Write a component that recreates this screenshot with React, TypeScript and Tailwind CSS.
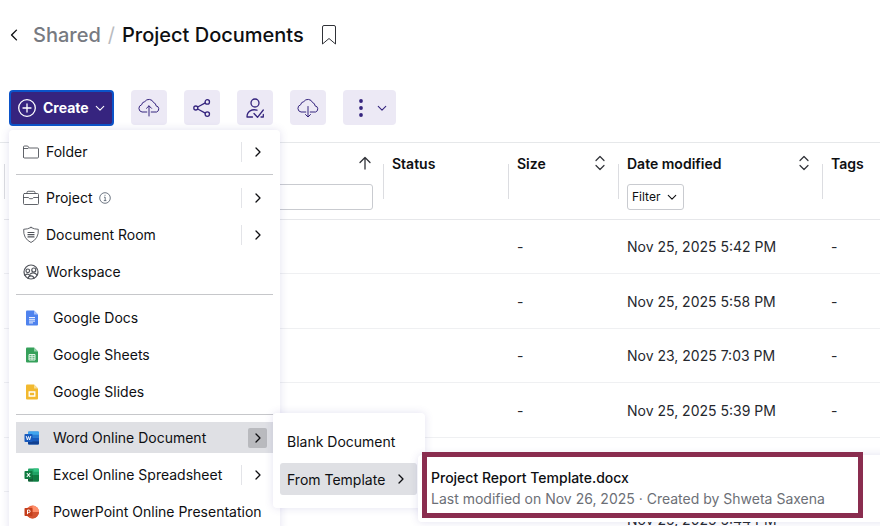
import type { ReactNode } from 'react'

// null: nothing to show for that file yet
const ROWS = [
  'Nov 25, 2025 5:42 PM',
  'Nov 25, 2025 5:58 PM',
  'Nov 23, 2025 7:03 PM',
  'Nov 25, 2025 5:39 PM',
  null,
  'Nov 25, 2025 5:44 PM',
]

function Chevron({ dir, className }: { dir: 'left' | 'right' | 'down'; className: string }) {
  const d = { left: 'M7.8 1.5 3.3 6l4.500 4.500', right: 'M4 2 8 6 4 10', down: 'M1.5 4 6 8.5 10.5 4' }[dir]
  return (
    <svg viewBox="0 0 12 12" className={className} fill="none" stroke="currentColor" strokeWidth="1.3" strokeLinecap="round" strokeLinejoin="round">
      <path d={d} />
    </svg>
  )
}

function Line({ children, className = 'h-[18px] w-[18px]' }: { children: ReactNode; className?: string }) {
  return (
    <svg viewBox="0 0 18 18" className={className} fill="none" stroke="currentColor" strokeWidth="0.9" strokeLinecap="round" strokeLinejoin="round">
      {children}
    </svg>
  )
}

function CloudIcon({ up }: { up?: boolean }) {
  return (
    <svg viewBox="0 0 24 24" className="h-6 w-6" fill="none" stroke="currentColor" strokeWidth="1" strokeLinecap="round" strokeLinejoin="round">
      <path d="M9.800 16H5A3.700 3.700 0 0 1 4.600 8.800A4 4 0 0 1 7.800 5.600A5 5 0 0 1 16.600 6.600A3.300 3.300 0 0 1 19 9.800A3.200 3.200 0 0 1 19.600 16H14.200" />
      {up ? <path d="M12 20V10M9.500 12.300 12 9.800 14.500 12.300" /> : <path d="M12 10.500V20.500M9.500 18.500 12 21 14.500 18.500" />}
    </svg>
  )
}

function ShareIcon() {
  return (
    <svg viewBox="0 0 24 24" className="h-6 w-6" fill="none" stroke="currentColor" strokeWidth="1.3">
      <circle cx="5.800" cy="12" r="2" />
      <circle cx="17.300" cy="5.900" r="2.200" />
      <circle cx="17.300" cy="18.100" r="2.200" />
      <path d="M7.700 11 15.300 6.900M7.700 13l7.600 4.100" />
    </svg>
  )
}

function UserCheckIcon() {
  return (
    <svg viewBox="0 0 24 24" className="h-6 w-6" fill="none" stroke="currentColor" strokeWidth="1.3" strokeLinecap="round" strokeLinejoin="round">
      <circle cx="12" cy="7" r="4" />
      <path d="M14 14.200C9 12.800 4 15 4 21H9.500M11 17.500l3.500 3.800L20.300 14M18 21h2.300v-2.500" />
    </svg>
  )
}

const FolderIcon = () => (
  <Line>
    <path d="M1.500 14V4Q1.500 3 2.500 3H5.700L7.200 5H15.500Q16.500 5 16.500 6V14Q16.500 15 15.500 15H2.500Q1.500 15 1.500 14ZM1.500 5.500H6" />
  </Line>
)

const ProjectIcon = () => (
  <Line>
    <path d="M5 4.500V3.500Q5 2.300 6.200 2.300H11.800Q13 2.300 13 3.500V4.500M2.500 4.500H15.500Q16.500 4.500 16.500 5.500V14.500Q16.500 15.500 15.500 15.500H2.500Q1.500 15.500 1.500 14.500V5.500Q1.500 4.500 2.500 4.500ZM1.500 8.500H6.500L7.500 9.700H10.500L11.500 8.500H16.500" />
  </Line>
)

const RoomIcon = () => (
  <Line>
    <path d="M9 1.500Q12.500 3.300 16.300 3.300Q17 12.500 9 16.500Q1 12.500 1.700 3.300Q5.500 3.300 9 1.500Z" />
    <path d="M6 6.500H12M6 8.700H12M6 10.900H12" strokeWidth="1.200" />
  </Line>
)

const WorkspaceIcon = () => (
  <Line>
    <g strokeWidth="1.200">
      <circle cx="9" cy="9" r="7" />
      <circle cx="5.800" cy="7.800" r="1.800" />
      <circle cx="11.800" cy="7" r="2" />
      <path d="M3 12.300Q5.500 9.800 8 12.500M8.300 10.900Q12 8.500 15 11.800M6 15.300Q6.500 12.800 9 12.800T12 15.300" />
    </g>
  </Line>
)

function GoogleIcon({ kind }: { kind: 'docs' | 'sheets' | 'slides' }) {
  const fill = { docs: '#4f83ee', sheets: '#35a05a', slides: '#f2b92f' }[kind]
  const fold = { docs: '#a5c2fa', sheets: '#8fd0a5', slides: '#f8dd92' }[kind]
  return (
    <svg viewBox="0 0 12 16" className="h-4 w-3" fill="none">
      <path d="M1 0.500H8L12 4.500V14.500Q12 15.500 11 15.500H1Q0 15.500 0 14.500V1.500Q0 0.500 1 0.500Z" fill={fill} />
      <path d="M8 0.500 12 4.500H8Z" fill={fold} />
      {kind === 'docs' && <path d="M3 7.500H9M3 9.300H9M3 11.100H9M3 12.900H7" stroke="#fff" strokeWidth="0.900" />}
      {kind === 'sheets' && <path d="M3 7.500H9V13H3ZM3 9.300H9M3 11.200H9M6 7.500V13" stroke="#dff3e5" strokeWidth="1" />}
      {kind === 'slides' && <path d="M3.200 8H8.800V12H3.200Z" stroke="#fff" strokeWidth="1.300" />}
    </svg>
  )
}

const WordIcon = () => (
  <svg viewBox="0 0 16 16" className="h-4 w-4">
    <rect x="4" y="1.500" width="11" height="13" rx="1" fill="#2b7cd3" />
    <path d="M5 1.500H14Q15 1.500 15 2.500V4.700H4V2.500Q4 1.500 5 1.500Z" fill="#41a5ee" />
    <rect x="4" y="8" width="11" height="3.500" fill="#185abd" />
    <path d="M4 11.300H15V13.500Q15 14.500 14 14.500H5Q4 14.500 4 13.500Z" fill="#103f91" />
    <rect x="0.500" y="4" width="8" height="8" rx="0.800" fill="#185abd" />
    <path d="M2.200 6 3.400 10 4.500 6.500 5.600 10 6.800 6" fill="none" stroke="#fff" strokeWidth="0.900" />
  </svg>
)

const ExcelIcon = () => (
  <svg viewBox="0 0 16 16" className="h-4 w-4">
    <rect x="4" y="1.500" width="11" height="13" rx="1" fill="#21a366" />
    <path d="M9.500 1.500H14Q15 1.500 15 2.500V4.700H9.500Z" fill="#33c481" />
    <path d="M4 8H9.500V14.500H5Q4 14.500 4 13.500Z" fill="#185c37" />
    <path d="M9.500 8H15V13.500Q15 14.500 14 14.500H9.500Z" fill="#107c41" />
    <rect x="0.500" y="4" width="8" height="8" rx="0.800" fill="#107c41" />
    <path d="M2.800 6 6.200 10M6.200 6 2.800 10" fill="none" stroke="#fff" strokeWidth="1.100" />
  </svg>
)

const PowerPointIcon = () => (
  <svg viewBox="0 0 16 16" className="h-4 w-4">
    <circle cx="8.500" cy="8" r="6.500" fill="#ed6c47" />
    <path d="M8.500 1.500A6.500 6.500 0 0 1 15 8H8.500Z" fill="#ff8f6b" />
    <path d="M2 8H15A6.500 6.500 0 0 1 2 8Z" fill="#d35230" />
    <rect x="0.500" y="4" width="8" height="8" rx="0.800" fill="#c43e1c" />
    <path d="M3.500 10.200V6H4.800A1.300 1.300 0 0 1 4.800 8.600H3.500" fill="none" stroke="#fff" strokeWidth="1" />
  </svg>
)

const InfoIcon = () => (
  <svg viewBox="0 0 12 12" className="ml-[6px] h-3 w-3 text-gray-600" fill="none" stroke="currentColor" strokeWidth="0.800">
    <circle cx="6" cy="6" r="5.300" />
    <path d="M5 5.200H6.200V8.500M4.800 8.600H7.400M5.500 3.300H6.500" />
  </svg>
)

type Item = { label: string; icon: ReactNode; info?: boolean; arrow?: boolean; active?: boolean; app?: boolean }

const GROUPS: Item[][] = [
  [{ label: 'Folder', icon: <FolderIcon />, arrow: true }],
  [
    { label: 'Project', icon: <ProjectIcon />, info: true, arrow: true },
    { label: 'Document Room', icon: <RoomIcon />, arrow: true },
    { label: 'Workspace', icon: <WorkspaceIcon /> },
  ],
  [
    { label: 'Google Docs', icon: <GoogleIcon kind="docs" />, app: true },
    { label: 'Google Sheets', icon: <GoogleIcon kind="sheets" />, app: true },
    { label: 'Google Slides', icon: <GoogleIcon kind="slides" />, app: true },
  ],
  [
    { label: 'Word Online Document', icon: <WordIcon />, arrow: true, active: true, app: true },
    { label: 'Excel Online Spreadsheet', icon: <ExcelIcon />, arrow: true, app: true },
    { label: 'PowerPoint Online Presentation', icon: <PowerPointIcon />, app: true },
  ],
]

function MenuItem({ item }: { item: Item }) {
  return (
    <button role="menuitem" className={'flex h-[31px] w-full items-center text-left ' + (item.active ? 'bg-[#dfe0e4]' : 'bg-white')}>
      <span className={'flex shrink-0 justify-center text-[#50535a] ' + (item.app ? 'ml-2 mr-[13px] w-4' : 'mx-[6px] w-[18px]')}>
        {item.icon}
      </span>
      <span className="whitespace-nowrap">{item.label}</span>
      {item.info && <InfoIcon />}
      {item.arrow && (
        <span className={'ml-auto mr-[6px] flex h-5 items-center ' + (item.active ? '' : 'border-l border-[#e3e4e8]')}>
          <span className={'flex h-5 items-center justify-center rounded-xs ' + (item.active ? 'w-[19px] bg-[#b9babe]' : 'ml-[6px] w-[19px]')}>
            <Chevron dir="right" className="h-3 w-3" />
          </span>
        </span>
      )}
    </button>
  )
}

function CreateMenu() {
  return (
    <div role="menu" aria-label="Create" className="absolute left-[9px] top-[130px] z-10 w-[271px] rounded-sm bg-white px-[7px] py-[6px] shadow-[0_0_8px_rgba(80,70,160,0.16)]">
      {GROUPS.map((g, i) => (
        <div key={i} className={'flex flex-col gap-[6px] ' + (i > 0 ? 'mt-[7px] border-t border-[#c6c7ca] pt-[7px]' : '')}>
          {g.map((item) => (
            <MenuItem key={item.label} item={item} />
          ))}
        </div>
      ))}
    </div>
  )
}

function WordMenu() {
  return (
    <div role="menu" aria-label="Word Online Document" className="absolute left-[273px] top-[413px] z-20 flex w-[152px] flex-col gap-[6px] rounded-sm bg-white px-[7px] py-[13px] shadow-[0_0_8px_rgba(80,70,160,0.16)]">
      <button role="menuitem" className="flex h-[31px] w-full items-center px-[7px]">Blank Document</button>
      <button role="menuitem" className="flex h-[32px] w-[137px] items-center justify-between rounded-[3px] bg-[#dfe0e4] px-[7px]">
        From Template
        <Chevron dir="right" className="mr-[3px] h-3 w-3" />
      </button>
    </div>
  )
}

function TemplateMenu() {
  return (
    <div role="menu" aria-label="From Template" className="absolute left-[418px] top-[455px] z-30 w-[480px] rounded-sm bg-white px-[13px] py-3 shadow-[0_0_8px_rgba(80,70,160,0.16)]">
      <button role="menuitem" className="block text-left">
        <span className="block leading-[21px] font-medium">Project Report Template.docx</span>
        <span className="block leading-[22px] text-[#6c6f76]">Last modified on Nov 26, 2025 · Created by Shweta Saxena</span>
      </button>
      <div className="pointer-events-none absolute left-1 -top-[3px] h-[66px] w-[441px] border-5 border-[#8a2d4f]" />
    </div>
  )
}

function ToolButton({ label, children }: { label: string; children: ReactNode }) {
  return (
    <button aria-label={label} className="flex h-[35px] w-9 items-center justify-center rounded-sm bg-[#ece9f5] text-[#35247e]">
      {children}
    </button>
  )
}

function Sort() {
  return (
    <svg viewBox="0 0 12 16" className="h-4 w-3 shrink-0" fill="none" stroke="#303238" strokeWidth="1.200" strokeLinecap="round" strokeLinejoin="round">
      <path d="M2 5.500 6 1.500 10 5.500M2 10.500 6 14.500 10 10.500" />
    </svg>
  )
}

function Head({ title, sort, children }: { title: string; sort?: boolean; children?: ReactNode }) {
  return (
    <th scope="col" className="relative h-[77px] border-b border-[#e6e7ea] pl-[9px] pr-3 pt-[10px] text-left align-top font-semibold">
      <span className="absolute left-0 top-[21px] h-[35px] w-px bg-[#dcdde1]" />
      <span className="flex h-5 items-center justify-between">
        {title}
        {sort && <Sort />}
      </span>
      {children}
    </th>
  )
}

export default function App() {
  return (
    <div className="relative flex h-screen flex-col overflow-hidden bg-white font-['Inter',sans-serif] text-[14px] text-[#0e0f12]">
      <header className="flex h-[70px] shrink-0 items-center pl-2">
        <button aria-label="Back" className="flex w-[13px] justify-center">
          <Chevron dir="left" className="h-[14px] w-[14px]" />
        </button>
        <nav className="ml-3 flex items-center text-[20px] font-medium">
          <a href="#shared" className="text-[#777a81]">Shared</a>
          <span className="mx-[7px] font-normal text-[#b9bbc0]">/</span>
          <h1>Project Documents</h1>
        </nav>
        <button aria-label="Bookmark" className="ml-[18px]">
          <svg viewBox="0 0 14 20" className="h-5 w-[14px]" fill="none" stroke="#303238" strokeWidth="1" strokeLinejoin="round">
            <path d="M0.500 19V2Q0.500 0.500 2 0.500H12Q13.500 0.500 13.500 2V19L7 13.500Z" />
          </svg>
        </button>
      </header>

      <div className="flex h-[73px] shrink-0 items-start gap-[17px] border-b border-[#e6e8ea] px-[9px] pt-5">
        <button className="flex h-9 w-[105px] items-center rounded-sm border-2 border-[#0b53c9] bg-[#36247f] pl-[7px] leading-4 font-bold text-white">
          <svg viewBox="0 0 18 18" className="mr-[7px] h-[18px] w-[18px]" fill="none" stroke="currentColor" strokeWidth="1.300" strokeLinecap="round">
            <circle cx="9" cy="9" r="8.300" />
            <path d="M9 5V13M5 9H13" />
          </svg>
          Create
          <Chevron dir="down" className="ml-[6px] h-[10px] w-[10px]" />
        </button>
        <ToolButton label="Upload"><CloudIcon up /></ToolButton>
        <ToolButton label="Share"><ShareIcon /></ToolButton>
        <ToolButton label="Request approval"><UserCheckIcon /></ToolButton>
        <ToolButton label="Download"><CloudIcon /></ToolButton>
        <button aria-label="More" className="flex h-[35px] w-[53px] items-center gap-[14px] rounded-sm bg-[#ece9f5] pl-4 text-[#35247e]">
          <svg viewBox="0 0 4 18" className="h-[18px] w-1" fill="currentColor">
            <circle cx="2" cy="2" r="1.900" />
            <circle cx="2" cy="9" r="1.900" />
            <circle cx="2" cy="16" r="1.900" />
          </svg>
          <Chevron dir="down" className="h-[10px] w-[10px]" />
        </button>
      </div>

      <main className="pl-1">
        <table className="w-full table-fixed border-separate border-spacing-0">
          <colgroup>
            <col className="w-[379px]" />
            <col className="w-[125px]" />
            <col className="w-[110px]" />
            <col className="w-[204px]" />
            <col />
          </colgroup>
          <thead>
            <tr>
              <th scope="col" className="relative border-b border-[#e6e7ea] pl-[9px] pr-[10px] pt-[10px] text-left align-top font-semibold">
                <span className="absolute left-0 top-[21px] h-[35px] w-px bg-[#dcdde1]" />
                <span className="flex h-5 items-center justify-end">
                  <svg viewBox="0 0 14 14" aria-label="Sorted ascending" className="mr-[1px] h-[14px] w-[14px]" fill="none" stroke="#303238" strokeWidth="1.300" strokeLinecap="round" strokeLinejoin="round">
                    <path d="M7 13V1.500M2 6.500 7 1.500 12 6.500" />
                  </svg>
                </span>
                <input aria-label="Filter by name" className="mt-[11px] block h-[26px] w-full rounded-[3px] border border-[#c9cbd0]" />
              </th>
              <Head title="Status" />
              <Head title="Size" sort />
              <Head title="Date modified" sort>
                <button className="mt-[11px] flex h-[26px] w-[57px] items-center justify-between rounded-[3px] border border-[#c9cbd0] pl-1 pr-[6px] text-[12px] font-normal">
                  Filter
                  <Chevron dir="down" className="h-[10px] w-[10px]" />
                </button>
              </Head>
              <Head title="Tags" />
            </tr>
          </thead>
          <tbody className="text-[#26282e]">
            {ROWS.map((date, i) => (
              <tr key={i} className="odd:h-[54px] even:h-[55px] *:border-b *:border-[#eff0f2] *:pl-[9px]">
                <td />
                <td />
                <td>{date && '-'}</td>
                <td className="whitespace-nowrap">{date}</td>
                <td>{date && '-'}</td>
              </tr>
            ))}
          </tbody>
        </table>
      </main>

      <CreateMenu />
      <WordMenu />
      <TemplateMenu />
    </div>
  )
}
